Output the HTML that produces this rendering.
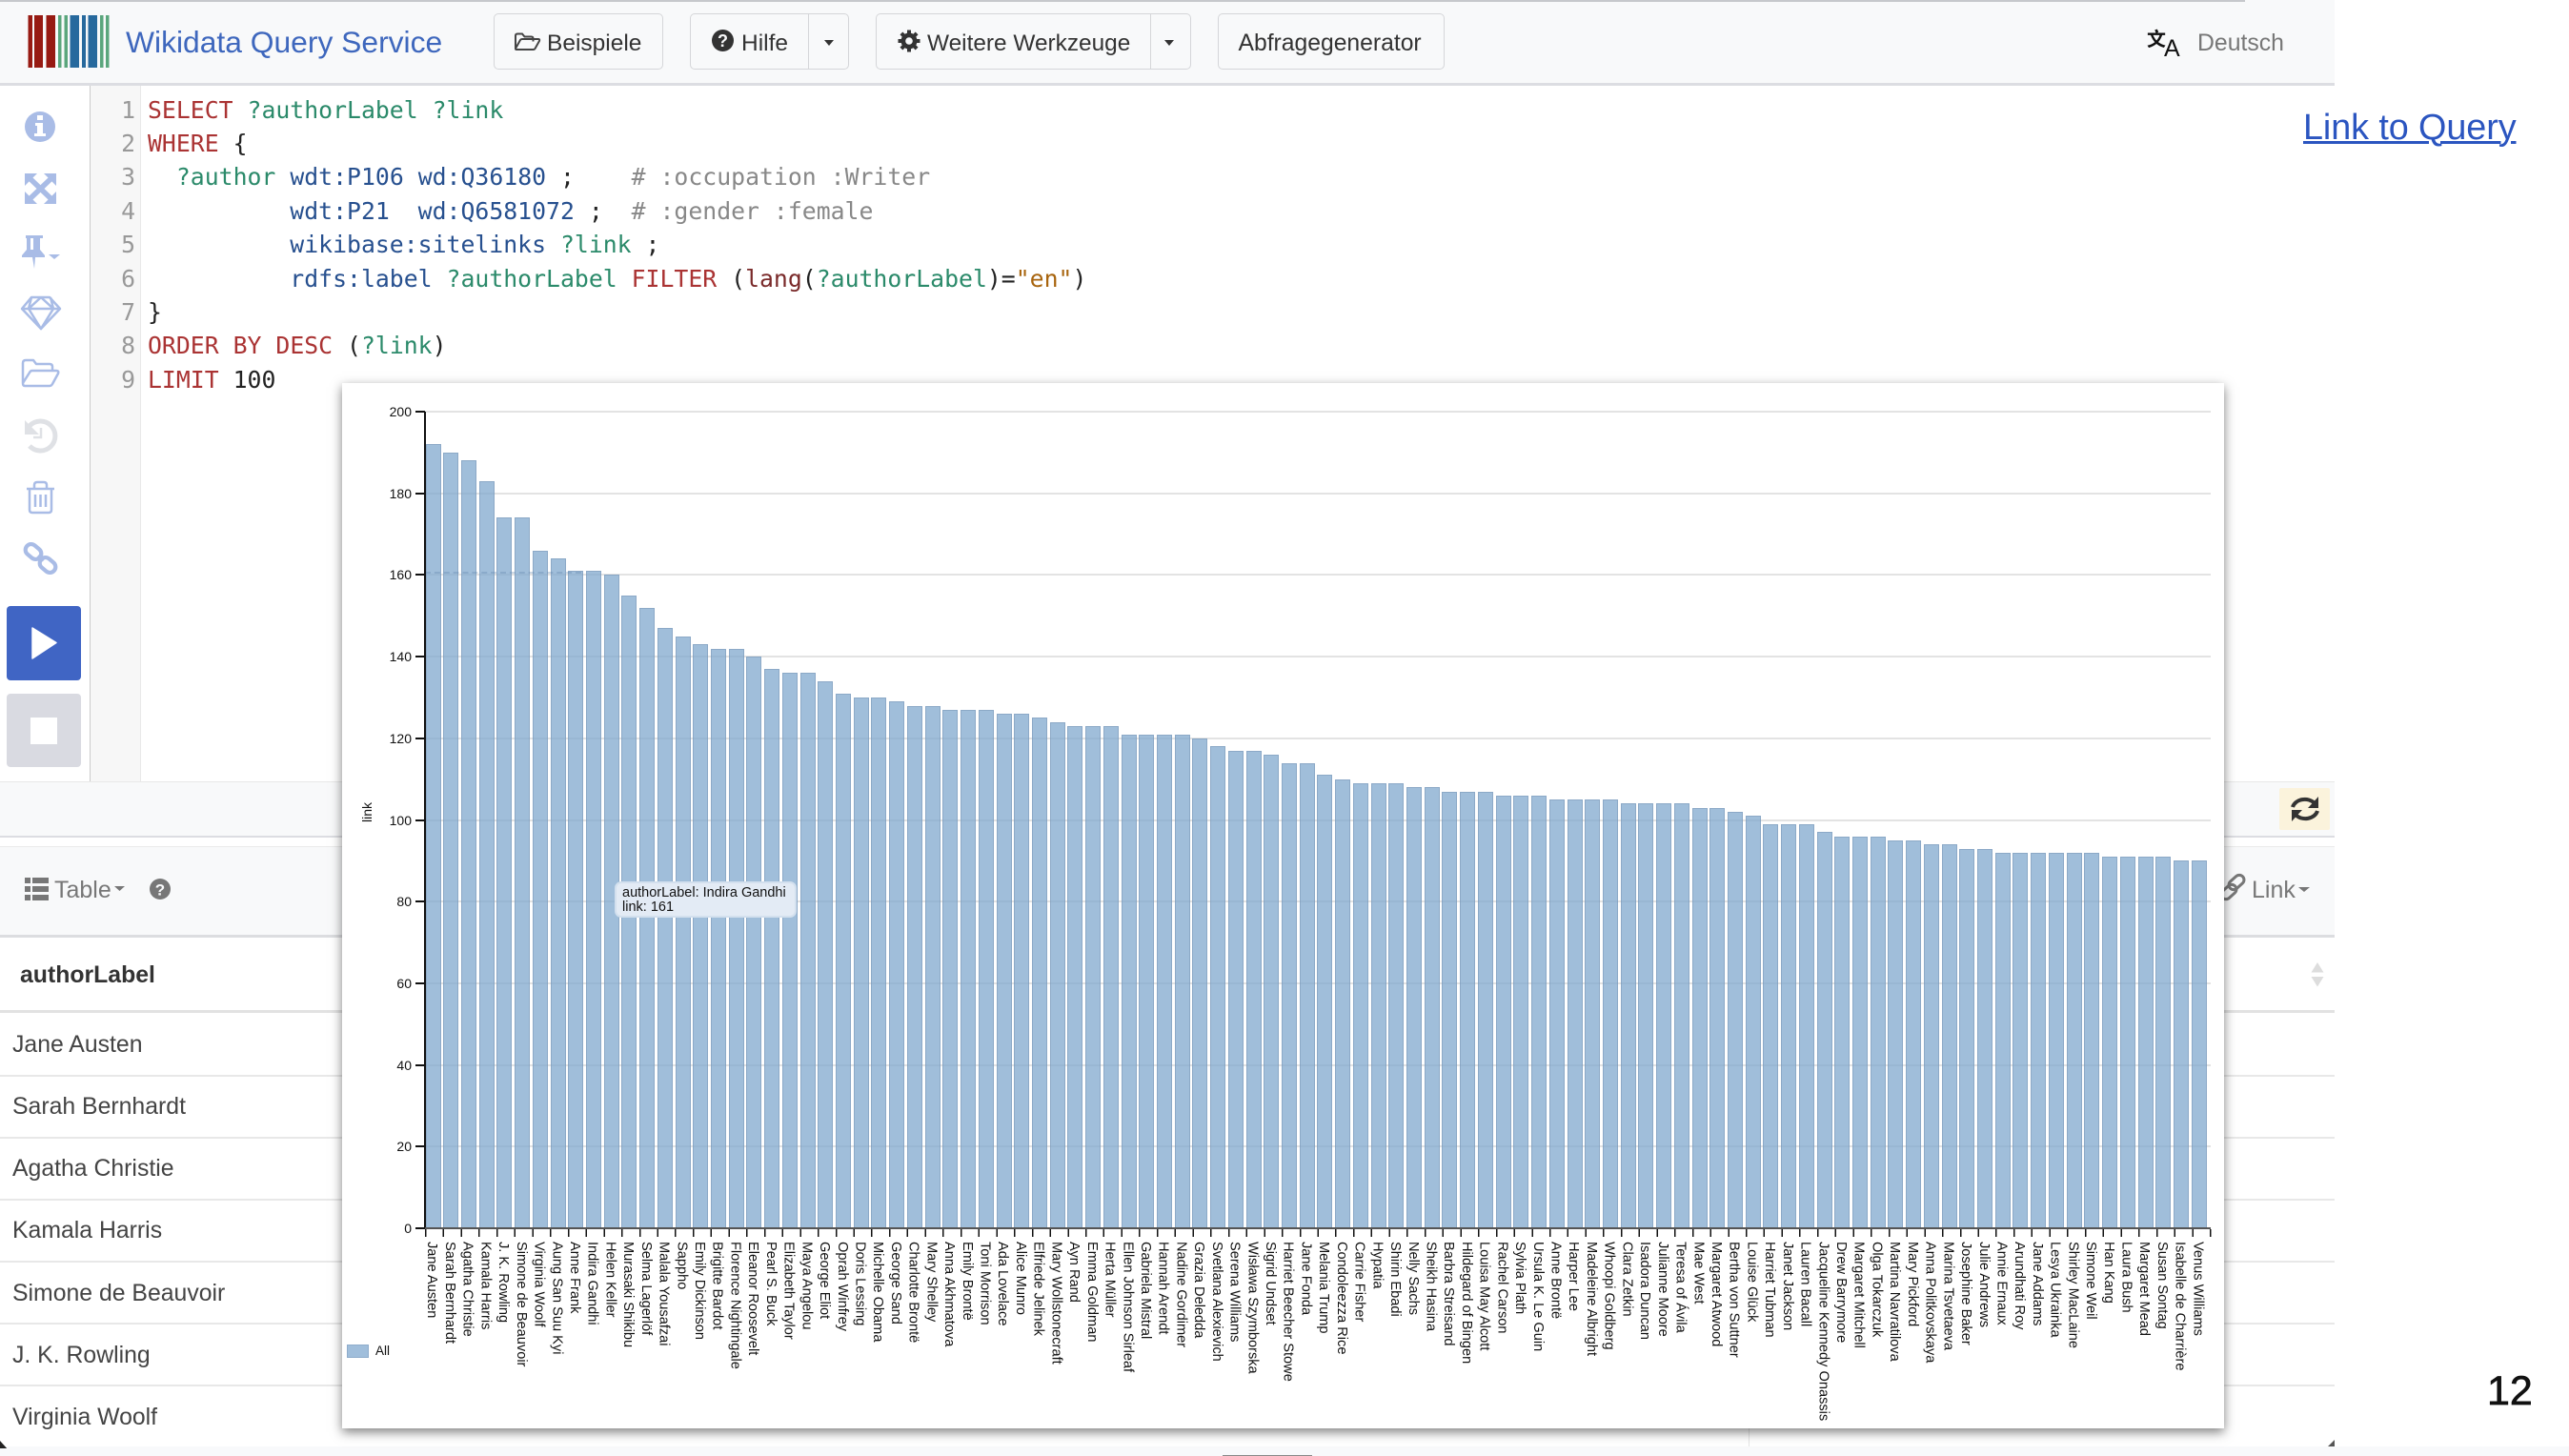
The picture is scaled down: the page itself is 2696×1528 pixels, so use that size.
<!DOCTYPE html>
<html lang="de"><head><meta charset="utf-8"><title>Wikidata Query Service</title>
<style>
html,body{margin:0;padding:0;background:#fff}
body{position:relative;width:2696px;height:1528px;overflow:hidden;font-family:"Liberation Sans",sans-serif;color:#444}
.a,.t{position:absolute}
.t{white-space:nowrap;line-height:1}
.btn{position:absolute;top:14px;height:59px;border:1px solid #d5d6d9;border-radius:5px;background:#f8f9fa;box-sizing:border-box}
.nav{font-size:24.5px;color:#333;top:34px}
.code{position:absolute;left:155px;top:97.5px;font:24.8px/35.4px "DejaVu Sans Mono","Liberation Mono",monospace;white-space:pre;color:#222}
.ln{position:absolute;left:100px;width:42px;top:97.5px;text-align:right;font:24.8px/35.4px "DejaVu Sans Mono","Liberation Mono",monospace;color:#999;white-space:pre}
.k{color:#a33}.v{color:#2b8a6a}.q{color:#27508f}.c{color:#888}.s{color:#a8650f}.f{color:#7a2a2a}
.rowl{position:absolute;left:0;width:2450px;height:2px;background:#e8e8e8}
.row{position:absolute;left:14px;font-size:24.8px;line-height:1;color:#444;white-space:nowrap}
.grid{position:absolute;left:446px;width:1874px;height:2px;background:#e3e3e3}
.yt{position:absolute;left:436px;width:10px;height:2px;background:#111}
.yl{position:absolute;left:392px;width:40px;text-align:right;font-size:14px;line-height:14px;color:#111}
#bars{position:absolute;left:446.5px;top:400px;height:889px;display:flex;align-items:flex-end}
#bars i{display:block;flex:none;width:16px;margin-right:2.73px;height:calc(var(--v)*4.285px);box-sizing:border-box;background:rgba(130,170,207,.76);border:1px solid rgba(120,148,180,.5);border-bottom:none}
#labs{position:absolute;left:443.5px;top:1303px;display:flex}
#labs b{display:block;flex:none;width:18.73px;font-weight:normal;writing-mode:vertical-rl;font-size:14.6px;line-height:18.73px;color:#111;white-space:nowrap;text-align:left}
</style></head>
<body>
<!-- nav -->
<div class="a" style="left:0;top:0;width:2450px;height:90px;background:#f8f9fa;border-bottom:3px solid #dcdde2;box-sizing:border-box"></div>
<div class="a" style="left:0;top:0;width:2356px;height:2px;background:#c6c8cc"></div>
<svg class="a" style="left:0;top:0" width="130" height="90">
<g fill="#971a12"><rect x="29.5" y="16" width="4.5" height="55"/><rect x="36" y="16" width="9" height="55"/><rect x="48.5" y="16" width="9.5" height="55"/></g>
<g fill="#5aa67c"><rect x="61" y="16" width="3.5" height="55"/><rect x="67.5" y="16" width="3.5" height="55"/><rect x="105" y="16" width="3.5" height="55"/><rect x="111" y="16" width="3.5" height="55"/></g>
<g fill="#27699d"><rect x="73.5" y="16" width="9.5" height="55"/><rect x="86" y="16" width="4" height="55"/><rect x="92.5" y="16" width="9.5" height="55"/></g>
</svg>
<div class="t" style="left:132px;top:29px;font-size:31.8px;color:#3e67bd">Wikidata Query Service</div>
<div class="btn" style="left:518px;width:178px"></div>
<div class="btn" style="left:724px;width:167px"></div><div class="a" style="left:848px;top:14px;width:1px;height:59px;background:#d5d6d9"></div>
<div class="btn" style="left:919px;width:331px"></div><div class="a" style="left:1207px;top:14px;width:1px;height:59px;background:#d5d6d9"></div>
<div class="btn" style="left:1278px;width:238px"></div>
<div class="t nav" style="left:574px">Beispiele</div>
<div class="t nav" style="left:778px">Hilfe</div>
<div class="t nav" style="left:973px;font-size:24.4px">Weitere Werkzeuge</div>
<div class="t nav" style="left:1299.5px;font-size:24.7px">Abfragegenerator</div>
<div class="t" style="left:2306px;top:34px;font-size:24.8px;color:#777">Deutsch</div>
<div class="t" style="left:2253px;top:30px;font:20px/1 'Noto Sans CJK SC',sans-serif;color:#111;font-weight:bold">文</div>
<div class="t" style="left:2271px;top:39px;font-size:25px;color:#111">A</div>
<svg class="a" style="left:0;top:0" width="1300" height="90">
<path d="M541 51V37.500q0-2 2-2h5l2.500 3h7q2 0 2 2v3M541 51l5-9q.7-1 2-1h17q1.700 0 1 2l-4.500 8q-.6 1-2 1H542q-1 0-1-1z" fill="none" stroke="#444" stroke-width="2"/>
<circle cx="758.500" cy="42.500" r="11.500" fill="#333"/>
<text x="758.500" y="49" text-anchor="middle" font-family="Liberation Sans" font-weight="bold" font-size="18" fill="#f8f9fa">?</text>
<path d="M865 42h10l-5 6zM1222 42h10l-5 6z" fill="#333"/>
<g fill="#333"><circle cx="954" cy="43" r="8.500"/><g stroke="#333" stroke-width="4"><path d="M954 31.500v23M942.500 43h23M945.900 34.900l16.200 16.200M962.100 34.900l-16.200 16.200"/></g></g><circle cx="954" cy="43" r="3.800" fill="#f8f9fa"/>
</svg>
<!-- Link + 12 -->
<a class="t" style="left:2417px;top:113.5px;font-size:37.8px;line-height:1.100;color:#2b55c0;text-decoration:underline;text-decoration-thickness:3px;letter-spacing:-.1px">Link to Query</a>
<div class="t" style="left:2610px;top:1439px;font-size:43px;color:#111;-webkit-text-stroke:.7px #111">12</div>

<!-- editor -->
<div class="a" style="left:94px;top:90px;width:54px;height:730px;background:#f7f7f7;border-left:1.500px solid #ccc;border-right:1.500px solid #e9e9e9;box-sizing:border-box"></div>
<div class="ln">1
2
3
4
5
6
7
8
9</div>
<div class="code"><span class="k">SELECT</span> <span class="v">?authorLabel</span> <span class="v">?link</span>
<span class="k">WHERE</span> {
  <span class="v">?author</span> <span class="q">wdt:P106</span> <span class="q">wd:Q36180</span> ;    <span class="c"># :occupation :Writer</span>
          <span class="q">wdt:P21</span>  <span class="q">wd:Q6581072</span> ;  <span class="c"># :gender :female</span>
          <span class="q">wikibase:sitelinks</span> <span class="v">?link</span> ;
          <span class="q">rdfs:label</span> <span class="v">?authorLabel</span> <span class="k">FILTER</span> (<span class="f">lang</span>(<span class="v">?authorLabel</span>)=<span class="s">"en"</span>)
}
<span class="k">ORDER</span> <span class="k">BY</span> <span class="k">DESC</span> (<span class="v">?link</span>)
<span class="k">LIMIT</span> 100</div>
<!-- sidebar icons -->
<svg class="a" style="left:0;top:90px" width="94" height="730" viewBox="0 90 94 730">
<circle cx="42" cy="133" r="16" fill="#a9bce6"/><path d="M39 121h6v5h-6zM37 129h8v11h3v3H36v-3h3v-8h-2z" fill="#fff"/>
<g fill="#a9bce6"><path d="M26 182h13L26 195zM59 182H46l13 13zM26 214h13L26 201zM59 214H46l13-13z"/></g><path d="M31 187l23 22M54 187L31 209" stroke="#a9bce6" stroke-width="5.500" fill="none"/>
<path d="M27 247h18v3h-3v12l5 6v2H37l-1 12-2-12H23v-2l5-6v-12h-1zM32 250v12h3v-12z" fill="#a9bce6"/><path d="M51 267h12l-6 5z" fill="#a9bce6"/>
<g fill="none" stroke="#a9bce6" stroke-width="2.500" stroke-linejoin="round"><path d="M33 312h19l11 12-20 21-20-21z"/><path d="M23 324h40M33 312l-3 12 13 21 13-21-3-12M43 312l-13 12M43 312l13 12"/></g>
<path d="M24 402V381q0-3 3-3h8l3 4h14q3 0 3 3v4M24 402l7-11q.8-2 3-2h25q3 0 2 3l-6 11q-1 2-3 2H26q-2 0-2-3z" fill="none" stroke="#a9bce6" stroke-width="2.500" stroke-linejoin="round"/>
<path d="M31 447a15.500 15.500 0 1 1 0 21" fill="none" stroke="#dfe1e5" stroke-width="5"/><path d="M26 441v15h15z" fill="#dfe1e5"/><path d="M43 449v10h-8" fill="none" stroke="#dfe1e5" stroke-width="2.500"/>
<g fill="none" stroke="#a9bce6" stroke-width="2.500" stroke-linejoin="round"><path d="M28 513h29M31 513v22q0 3 3 3h17q3 0 3-3v-22M36 513v-4q0-3 3-3h7q3 0 3 3v4"/><path d="M37 519v13M42.500 519v13M48 519v13"/></g>
<g fill="none" stroke="#a9bce6" stroke-width="4.200" stroke-linejoin="round"><rect x="26" y="573" width="18" height="12" rx="6" transform="rotate(40 35 579)"/><rect x="41" y="587" width="18" height="12" rx="6" transform="rotate(40 50 593)"/></g><path d="M40 583l6 5" stroke="#a9bce6" stroke-width="4"/>
</svg>
<div class="a" style="left:7px;top:636px;width:78px;height:78px;background:#4065c4;border-radius:4px"></div>
<svg class="a" style="left:33px;top:657px" width="28" height="36"><path d="M1 2l25 15.500L1 34z" fill="#fff" stroke="#fff" stroke-width="1.500" stroke-linejoin="round"/></svg>
<div class="a" style="left:7px;top:728px;width:78px;height:77px;background:#d9dae1;border-radius:4px"></div>
<div class="a" style="left:32px;top:753px;width:28px;height:28px;background:#fff"></div>

<!-- status strip -->
<div class="a" style="left:0;top:820px;width:2450px;height:59px;background:#f8f9fa;border-top:1.500px solid #e8e8e8;border-bottom:2px solid #dcdde2;box-sizing:border-box"></div>
<div class="a" style="left:2392px;top:827px;width:53px;height:44px;background:#fbf3dc;border-radius:2px"></div>
<svg class="a" style="left:2400px;top:834px" width="38" height="30"><g fill="none" stroke="#333" stroke-width="4"><path d="M6 13a13 10.500 0 0 1 23-4"/><path d="M32 17a13 10.500 0 0 1-23 4"/></g><path d="M33 2v12H22zM5 28V16h11z" fill="#333"/></svg>
<!-- results toolbar -->
<div class="a" style="left:0;top:888px;width:2450px;height:96px;background:#f8f9fa;border-top:1px solid #eaeaea;border-bottom:3px solid #dcdde0;box-sizing:border-box"></div>
<svg class="a" style="left:0;top:900px" width="200" height="66"><g fill="#777"><rect x="26" y="21" width="6" height="6"/><rect x="34" y="21" width="17" height="6"/><rect x="26" y="30" width="6" height="6"/><rect x="34" y="30" width="17" height="6"/><rect x="26" y="39" width="6" height="6"/><rect x="34" y="39" width="17" height="6"/><path d="M120 30h11l-5.500 5z"/><circle cx="168" cy="33" r="11"/></g><text x="168" y="39.500" text-anchor="middle" font-family="Liberation Sans" font-weight="bold" font-size="17" fill="#f8f9fa">?</text></svg>
<div class="t" style="left:57px;top:921.5px;font-size:25px;color:#777">Table</div>
<svg class="a" style="left:2330px;top:914px" width="100" height="36"><g fill="none" stroke="#777" stroke-width="3" stroke-linejoin="round"><rect x="8" y="7" width="18" height="10" rx="5" transform="rotate(-42 17 12)"/><rect x="0" y="17" width="18" height="10" rx="5" transform="rotate(-42 9 22)"/></g><path d="M82 17h12l-6 5z" fill="#777"/></svg>
<div class="t" style="left:2363px;top:921.5px;font-size:25px;color:#777">Link</div>

<!-- table -->
<div class="t" style="left:21px;top:1011.5px;font-size:24.8px;font-weight:bold;color:#333">authorLabel</div>
<svg class="a" style="left:2425px;top:1010px" width="14" height="26"><path d="M7 0l6.500 10.500H.5zM.5 15h13L7 25.500z" fill="#ddd"/></svg>
<div class="rowl" style="top:1060px;height:3px;background:#e2e2e2"></div>
<div class="rowl" style="top:1128px"></div><div class="rowl" style="top:1193px"></div><div class="rowl" style="top:1258px"></div><div class="rowl" style="top:1323px"></div><div class="rowl" style="top:1388px"></div><div class="rowl" style="top:1453px"></div>
<div class="row" style="left:13px;top:1084.500px">Jane Austen</div>
<div class="row" style="left:13px;top:1149.500px">Sarah Bernhardt</div>
<div class="row" style="left:13px;top:1214.500px">Agatha Christie</div>
<div class="row" style="left:13px;top:1279.500px">Kamala Harris</div>
<div class="row" style="left:13px;top:1345.500px">Simone de Beauvoir</div>
<div class="row" style="left:13px;top:1410.500px">J. K. Rowling</div>
<div class="row" style="left:13px;top:1475.500px">Virginia Woolf</div>
<!-- bottom -->
<div class="a" style="left:0;top:1518px;width:2696px;height:10px;background:#f8f9fb"></div>
<div class="a" style="left:1283px;top:1527px;width:94px;height:1px;background:#888"></div>
<div class="a" style="left:1835px;top:1497px;width:1px;height:21px;background:#e5e5e5"></div>
<svg class="a" style="left:0;top:1508px" width="12" height="12"><path d="M0 4l9 10H0z" fill="#222"/></svg>
<svg class="a" style="left:2442px;top:1511px" width="8" height="8"><path d="M8 0v7H1z" fill="#555"/></svg>

<!-- chart panel -->
<div class="a" style="left:359px;top:402px;width:1975px;height:1097px;background:#fff;box-shadow:0 4px 11px rgba(0,0,0,.5)"></div>
<div class="grid" style="top:431px"></div><div class="grid" style="top:517px"></div><div class="grid" style="top:602px"></div><div class="grid" style="top:688px"></div><div class="grid" style="top:774px"></div><div class="grid" style="top:860px"></div><div class="grid" style="top:945px"></div><div class="grid" style="top:1031px"></div><div class="grid" style="top:1117px"></div><div class="grid" style="top:1202px"></div>
<div class="yt" style="top:431px"></div><div class="yt" style="top:517px"></div><div class="yt" style="top:602px"></div><div class="yt" style="top:688px"></div><div class="yt" style="top:774px"></div><div class="yt" style="top:860px"></div><div class="yt" style="top:945px"></div><div class="yt" style="top:1031px"></div><div class="yt" style="top:1117px"></div><div class="yt" style="top:1202px"></div><div class="yt" style="top:1288px"></div>
<div class="yl" style="top:425px">200</div><div class="yl" style="top:511px">180</div><div class="yl" style="top:596px">160</div><div class="yl" style="top:682px">140</div><div class="yl" style="top:768px">120</div><div class="yl" style="top:854px">100</div><div class="yl" style="top:939px">80</div><div class="yl" style="top:1025px">60</div><div class="yl" style="top:1111px">40</div><div class="yl" style="top:1196px">20</div><div class="yl" style="top:1282px">0</div>
<div class="t" style="left:378px;top:845px;font-size:14px;color:#111;transform:rotate(-90deg);transform-origin:center;width:14px;height:14px;text-align:center"><span style="display:inline-block;margin-left:-4px">link</span></div>
<div id="bars"><i style="--v:192"></i><i style="--v:190"></i><i style="--v:188"></i><i style="--v:183"></i><i style="--v:174"></i><i style="--v:174"></i><i style="--v:166"></i><i style="--v:164"></i><i style="--v:161"></i><i style="--v:161"></i><i style="--v:160"></i><i style="--v:155"></i><i style="--v:152"></i><i style="--v:147"></i><i style="--v:145"></i><i style="--v:143"></i><i style="--v:142"></i><i style="--v:142"></i><i style="--v:140"></i><i style="--v:137"></i><i style="--v:136"></i><i style="--v:136"></i><i style="--v:134"></i><i style="--v:131"></i><i style="--v:130"></i><i style="--v:130"></i><i style="--v:129"></i><i style="--v:128"></i><i style="--v:128"></i><i style="--v:127"></i><i style="--v:127"></i><i style="--v:127"></i><i style="--v:126"></i><i style="--v:126"></i><i style="--v:125"></i><i style="--v:124"></i><i style="--v:123"></i><i style="--v:123"></i><i style="--v:123"></i><i style="--v:121"></i><i style="--v:121"></i><i style="--v:121"></i><i style="--v:121"></i><i style="--v:120"></i><i style="--v:118"></i><i style="--v:117"></i><i style="--v:117"></i><i style="--v:116"></i><i style="--v:114"></i><i style="--v:114"></i><i style="--v:111"></i><i style="--v:110"></i><i style="--v:109"></i><i style="--v:109"></i><i style="--v:109"></i><i style="--v:108"></i><i style="--v:108"></i><i style="--v:107"></i><i style="--v:107"></i><i style="--v:107"></i><i style="--v:106"></i><i style="--v:106"></i><i style="--v:106"></i><i style="--v:105"></i><i style="--v:105"></i><i style="--v:105"></i><i style="--v:105"></i><i style="--v:104"></i><i style="--v:104"></i><i style="--v:104"></i><i style="--v:104"></i><i style="--v:103"></i><i style="--v:103"></i><i style="--v:102"></i><i style="--v:101"></i><i style="--v:99"></i><i style="--v:99"></i><i style="--v:99"></i><i style="--v:97"></i><i style="--v:96"></i><i style="--v:96"></i><i style="--v:96"></i><i style="--v:95"></i><i style="--v:95"></i><i style="--v:94"></i><i style="--v:94"></i><i style="--v:93"></i><i style="--v:93"></i><i style="--v:92"></i><i style="--v:92"></i><i style="--v:92"></i><i style="--v:92"></i><i style="--v:92"></i><i style="--v:92"></i><i style="--v:91"></i><i style="--v:91"></i><i style="--v:91"></i><i style="--v:91"></i><i style="--v:90"></i><i style="--v:90"></i></div>
<div class="a" style="left:446px;top:600px;width:164px;height:0;border-top:2px dashed rgba(90,125,165,.3)"></div>
<div class="a" style="left:445px;top:432px;width:2px;height:858px;background:#111"></div>
<div class="a" style="left:446px;top:1288px;width:1874px;height:2px;background:#555"></div>
<div class="a" style="left:445.500px;top:1290px;width:1875.500px;height:8px;background:repeating-linear-gradient(to right,#111 0,#111 1.500px,transparent 1.500px,transparent 18.730px)"></div>
<div id="labs"><b>Jane Austen</b><b>Sarah Bernhardt</b><b>Agatha Christie</b><b>Kamala Harris</b><b>J. K. Rowling</b><b>Simone de Beauvoir</b><b>Virginia Woolf</b><b>Aung San Suu Kyi</b><b>Anne Frank</b><b>Indira Gandhi</b><b>Helen Keller</b><b>Murasaki Shikibu</b><b>Selma Lagerlöf</b><b>Malala Yousafzai</b><b>Sappho</b><b>Emily Dickinson</b><b>Brigitte Bardot</b><b>Florence Nightingale</b><b>Eleanor Roosevelt</b><b>Pearl S. Buck</b><b>Elizabeth Taylor</b><b>Maya Angelou</b><b>George Eliot</b><b>Oprah Winfrey</b><b>Doris Lessing</b><b>Michelle Obama</b><b>George Sand</b><b>Charlotte Brontë</b><b>Mary Shelley</b><b>Anna Akhmatova</b><b>Emily Brontë</b><b>Toni Morrison</b><b>Ada Lovelace</b><b>Alice Munro</b><b>Elfriede Jelinek</b><b>Mary Wollstonecraft</b><b>Ayn Rand</b><b>Emma Goldman</b><b>Herta Müller</b><b>Ellen Johnson Sirleaf</b><b>Gabriela Mistral</b><b>Hannah Arendt</b><b>Nadine Gordimer</b><b>Grazia Deledda</b><b>Svetlana Alexievich</b><b>Serena Williams</b><b>Wisława Szymborska</b><b>Sigrid Undset</b><b>Harriet Beecher Stowe</b><b>Jane Fonda</b><b>Melania Trump</b><b>Condoleezza Rice</b><b>Carrie Fisher</b><b>Hypatia</b><b>Shirin Ebadi</b><b>Nelly Sachs</b><b>Sheikh Hasina</b><b>Barbra Streisand</b><b>Hildegard of Bingen</b><b>Louisa May Alcott</b><b>Rachel Carson</b><b>Sylvia Plath</b><b>Ursula K. Le Guin</b><b>Anne Brontë</b><b>Harper Lee</b><b>Madeleine Albright</b><b>Whoopi Goldberg</b><b>Clara Zetkin</b><b>Isadora Duncan</b><b>Julianne Moore</b><b>Teresa of Ávila</b><b>Mae West</b><b>Margaret Atwood</b><b>Bertha von Suttner</b><b>Louise Glück</b><b>Harriet Tubman</b><b>Janet Jackson</b><b>Lauren Bacall</b><b>Jacqueline Kennedy Onassis</b><b>Drew Barrymore</b><b>Margaret Mitchell</b><b>Olga Tokarczuk</b><b>Martina Navratilova</b><b>Mary Pickford</b><b>Anna Politkovskaya</b><b>Marina Tsvetaeva</b><b>Josephine Baker</b><b>Julie Andrews</b><b>Annie Ernaux</b><b>Arundhati Roy</b><b>Jane Addams</b><b>Lesya Ukrainka</b><b>Shirley MacLaine</b><b>Simone Weil</b><b>Han Kang</b><b>Laura Bush</b><b>Margaret Mead</b><b>Susan Sontag</b><b>Isabelle de Charrière</b><b>Venus Williams</b></div>
<div class="a" style="left:645px;top:925px;width:191px;height:38px;box-sizing:border-box;background:#e3ebf5;border:2px solid #d3e0ee;border-radius:7px;padding:3px 6px;font-size:14.500px;line-height:14.500px;color:#111;white-space:nowrap">authorLabel: Indira Gandhi<br>link: 161</div>
<div class="a" style="left:364px;top:1411px;width:23px;height:14px;box-sizing:border-box;background:#a0bedb;border:1px solid #8eaccb"></div>
<div class="t" style="left:394px;top:1411px;font-size:13.500px;color:#111">All</div>
</body></html>
